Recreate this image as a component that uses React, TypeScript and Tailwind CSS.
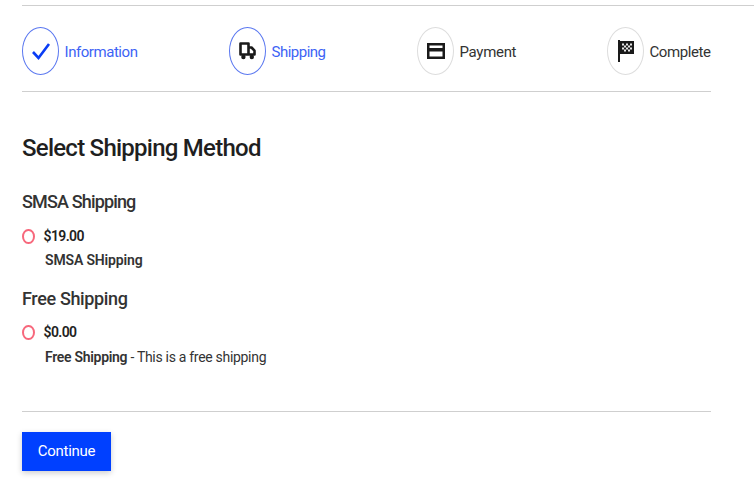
import React from "react";

function Step({ icon, label, active, width, tracking }: { icon: React.ReactNode; label: string; active?: boolean; width: string; tracking: string }) {
  return (
    <div className={`flex items-center gap-[5.5px] ${width}`}>
      <div className={`flex h-[48px] w-[37px] shrink-0 items-center justify-center rounded-[50%] border ${active ? "border-[#5b78f0]" : "border-[#dddddd]"}`}>
        {icon}
      </div>
      <span className={`mt-[2px] text-[15px] leading-5 whitespace-nowrap ${tracking} ${active ? "text-[#3d63f5]" : "text-[#333333]"}`}>{label}</span>
    </div>
  );
}

function Radio() {
  return <span className="block h-[15px] w-[12.5px] shrink-0 rounded-[50%] border-2 border-[#f7687c]" />;
}

export default function App() {
  return (
    <div className="h-[500px] w-[754px] overflow-hidden bg-white pl-[22px] font-['Roboto','Noto_Sans',sans-serif] text-[#222222]">
      <div className="mt-[5px] h-px bg-[#cfcfcf]" />
      <div className="w-[689px]">
        <div className="flex h-[85px] items-center pt-[5px]">
          <Step
            width="w-[207px]"
            tracking="tracking-[-0.45px]"
            active
            label="Information"
            icon={
              <svg width="20" height="20" viewBox="0 0 20 20" fill="none">
                <path d="M2 11l5.5 6L18 3" stroke="#0a3df5" strokeWidth="2.6" />
              </svg>
            }
          />
          <Step
            width="w-[188px]"
            tracking="tracking-[-0.5px]"
            active
            label="Shipping"
            icon={
              <svg width="17" height="18" viewBox="0 0 17 18" fill="none">
                <path d="M1.5 1.5h8v11h-8zM9.5 5.5h3l3 3.2v3.8h-6z" stroke="#1a1a1a" strokeWidth="2.6" strokeLinejoin="round" />
                <circle cx="4.4" cy="15" r="2.2" fill="#1a1a1a" />
                <circle cx="12.8" cy="15" r="2.2" fill="#1a1a1a" />
              </svg>
            }
          />
          <Step
            width="w-[190px]"
            tracking="tracking-[-0.3px]"
            label="Payment"
            icon={
              <svg width="18" height="16" viewBox="0 0 18 16" fill="none">
                <rect x="1.25" y="1.25" width="15.5" height="13.5" stroke="#1a1a1a" strokeWidth="2.5" />
                <rect x="1" y="5" width="16" height="3.5" fill="#1a1a1a" />
              </svg>
            }
          />
          <Step
            width="w-[104px]"
            tracking="tracking-[-0.4px]"
            label="Complete"
            icon={
              <svg width="16" height="22" viewBox="0 0 16 22">
                <path d="M0 0h2v22H0z" fill="#1a1a1a" />
                <path d="M2 1h14v13H2z" fill="#1a1a1a" />
                <path d="M4 3.5h2v2H4zM8 3.5h2v2H8zM12 3.5h2v2h-2zM6 5.5h2v2H6zM10 5.5h2v2h-2zM4 7.5h2v2H4zM8 7.5h2v2H8zM12 7.5h2v2h-2zM6 9.5h2v2H6zM10 9.5h2v2h-2z" fill="#e8e8e8" />
              </svg>
            }
          />
        </div>
        <div className="h-px bg-[#cfcfcf]" />

        <h2 className="mt-[40px] text-[24px] leading-8 font-medium tracking-[-0.75px] text-[#1f1f1f]">Select Shipping Method</h2>

        <h3 className="mt-[26px] text-[18px] leading-6 font-medium tracking-[-0.85px] text-[#333333]">SMSA Shipping</h3>
        <div className="mt-[10px] flex h-[24px] items-center gap-[9px]">
          <Radio />
          <span className="text-[14px] font-semibold tracking-[-0.6px] text-[#222222]">$19.00</span>
        </div>
        <p className="pl-[23px] text-[14px] leading-6 font-semibold tracking-[-0.15px] text-[#333333]">SMSA SHipping</p>

        <h3 className="mt-[15px] text-[18px] leading-6 font-medium tracking-[-0.35px] text-[#333333]">Free Shipping</h3>
        <div className="mt-[9px] flex h-[24px] items-center gap-[9px]">
          <Radio />
          <span className="text-[14px] font-semibold tracking-[-0.6px] text-[#222222]">$0.00</span>
        </div>
        <p className="mt-px pl-[23px] text-[14px] leading-6 tracking-[-0.3px] text-[#333333]">
          <span className="font-semibold">Free Shipping</span> - This is a free shipping
        </p>

        <div className="mt-[42px] h-px bg-[#cfcfcf]" />
        <button className="mt-[20px] flex h-[39px] w-[89px] items-center justify-center bg-[#0040ff] text-[15px] tracking-[-0.25px] text-white shadow-[0_2px_6px_rgba(0,0,0,0.2)]">
          Continue
        </button>
      </div>
    </div>
  );
}
